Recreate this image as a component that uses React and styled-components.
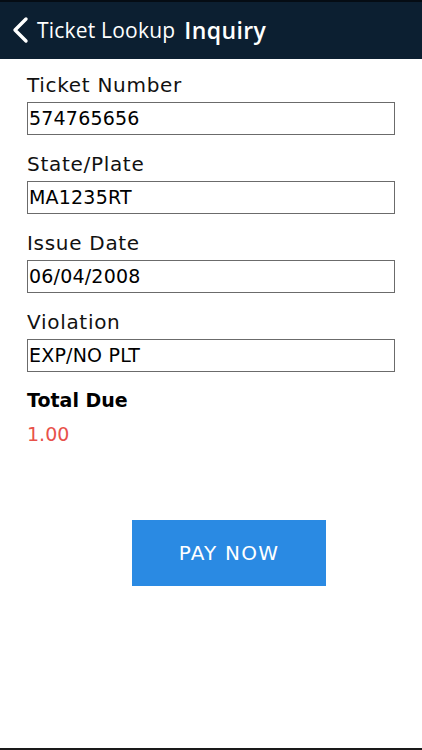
import styled, { createGlobalStyle } from "styled-components"

const GlobalStyle = createGlobalStyle`
    html, body {
        margin: 0;
        padding: 0;
        background: #fff;
    }
    body {
        font-family: "Open Sans", "Liberation Sans", sans-serif;
    }
`

const fields = [
    { label: "Ticket Number", value: "574765656" },
    { label: "State/Plate", value: "MA1235RT" },
    { label: "Issue Date", value: "06/04/2008" },
    { label: "Violation", value: "EXP/NO PLT" },
]

function BackIcon() {
    return (
        <svg width="18" height="28" viewBox="0 0 18 28">
            <path d="M15 3 L4 14 L15 25" fill="none" stroke="#fff" strokeWidth="3.4" strokeLinecap="round" strokeLinejoin="round" />
        </svg>
    )
}

export default function App() {
    return (
        <Screen>
            <GlobalStyle />
            <Header>
                <BackIcon />
                <BackText>Ticket Lookup</BackText>
                <Title>Inquiry</Title>
            </Header>

            <Form>
                {fields.map((f) => (
                    <Field key={f.label}>
                        <Label>{f.label}</Label>
                        <Input>{f.value}</Input>
                    </Field>
                ))}

                <TotalLabel>Total Due</TotalLabel>
                <TotalValue>1.00</TotalValue>
            </Form>

            <ButtonRow>
                <PayButton>PAY NOW</PayButton>
            </ButtonRow>
        </Screen>
    )
}

const Screen = styled.div`
    width: 422px;
    height: 750px;
    display: flex;
    flex-direction: column;
    box-sizing: border-box;
    border-bottom: 2px solid #1a1a1a;
    overflow: hidden;
`

const Header = styled.div`
    height: 59px;
    background-color: #0c1f31;
    border-top: 2px solid #050c14;
    box-sizing: border-box;
    display: flex;
    align-items: center;
    padding: 0 0 2px 11px;
    color: #fff;

    svg {
        margin-right: 8px;
    }
`

const BackText = styled.span`
    font-size: 21px;
    font-weight: 400;
    letter-spacing: 0.2px;
    margin-right: 9px;
`

const Title = styled.span`
    font-size: 23px;
    font-weight: 600;
    letter-spacing: 0.4px;
`

const Form = styled.div`
    display: flex;
    flex-direction: column;
    padding: 9px 27px 0 27px;
    font-family: "DejaVu Sans", "Open Sans", sans-serif;
`

const Field = styled.div`
    display: flex;
    flex-direction: column;
    margin-bottom: 12px;
`

const Label = styled.div`
    font-size: 20px;
    line-height: 34px;
    color: #111;
    letter-spacing: 0.7px;
`

const Input = styled.div`
    width: 368px;
    height: 33px;
    box-sizing: border-box;
    border: 1px solid #6b6b6b;
    padding: 0 1px;
    font-size: 19px;
    line-height: 31px;
    color: #000;
    letter-spacing: 0.2px;
`

const TotalLabel = styled.div`
    font-size: 19px;
    font-weight: 700;
    line-height: 34px;
    color: #000;
    margin-top: -1px;
`

const TotalValue = styled.div`
    font-size: 19px;
    line-height: 34px;
    color: #e8524a;
`

const ButtonRow = styled.div`
    display: flex;
    justify-content: center;
    padding: 69px 0 0 36px;
`

const PayButton = styled.button`
    width: 194px;
    height: 66px;
    background-color: #2a8ae3;
    border: none;
    color: #fff;
    font-family: "DejaVu Sans", "Open Sans", sans-serif;
    font-size: 20px;
    letter-spacing: 1.2px;
    cursor: pointer;
`
